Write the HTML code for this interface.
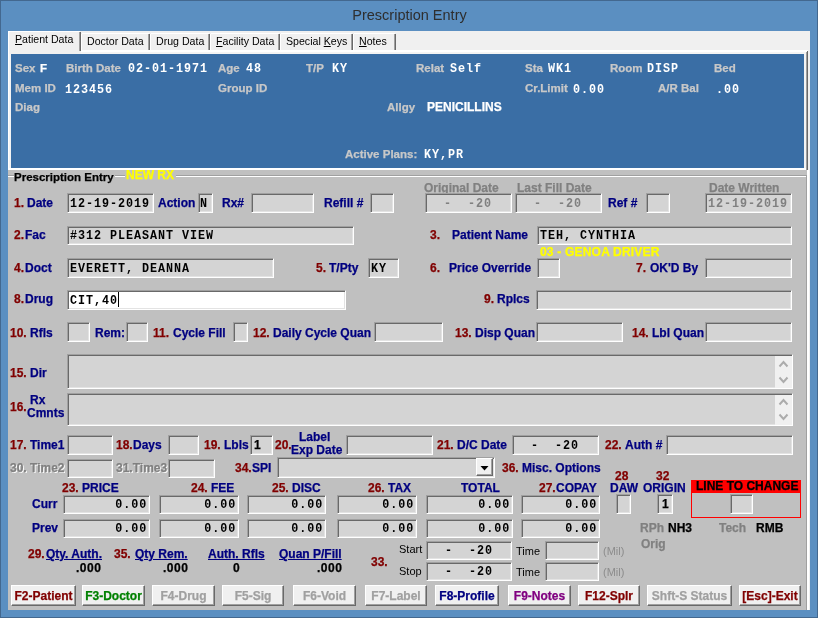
<!DOCTYPE html><html><head><meta charset="utf-8"><style>
*{margin:0;padding:0;box-sizing:border-box}
html,body{width:818px;height:618px;overflow:hidden;-webkit-font-smoothing:antialiased;background:#5b8fc1;font-family:"Liberation Sans",sans-serif}
#win{position:absolute;left:0;top:0;width:818px;height:618px;background:#5b8fc1;border:1px solid #43688f}
#title{position:absolute;left:0;top:7px;width:818px;text-align:center;font-size:14.5px;color:#2e2e2e;padding-left:1px}
#client{position:absolute;left:8px;top:31px;width:802px;height:579px;background:#f0f0f0}
.tabt{position:absolute;z-index:3;font-size:10.6px;color:#000;white-space:nowrap;line-height:13px}
.tabX{position:absolute;top:33px;height:19px;font-size:10.6px;color:#000;padding-left:6px;white-space:nowrap;line-height:17px;border-left:1px solid #fff;border-top:1px solid #fff}
.tab:after{content:"";position:absolute;right:0;top:1px;bottom:0;width:1px;background:#696969;box-shadow:-1px 0 #a0a0a0}
.pl{position:absolute;font-size:11.5px;font-weight:bold;-webkit-text-stroke:0.25px;color:#c8c8c8;white-space:nowrap;line-height:14px}
.pv{position:absolute;font-family:"Liberation Mono",monospace;font-size:13.33px;font-weight:bold;color:#fff;white-space:pre;line-height:14px;letter-spacing:1.09px;transform:scaleX(.88);transform-origin:0 0}
.l{position:absolute;font-size:12px;font-weight:bold;-webkit-text-stroke:0.25px;white-space:nowrap;line-height:14px}
.f{position:absolute;background:#d4d4d4;border:1px solid;border-color:#a0a0a0 #fff #fff #a0a0a0;box-shadow:inset 1px 1px #696969,inset -1px -1px #e3e3e3}
.v{position:absolute;font-family:"Liberation Mono",monospace;font-size:13.33px;font-weight:bold;color:#000;white-space:pre;line-height:14px;letter-spacing:1.09px;transform:scaleX(.88);transform-origin:0 0}
.vr{transform-origin:100% 0}
.b{position:absolute;top:585px;-webkit-text-stroke:0.25px;height:21px;background:#f0f0f0;border:1px solid;border-color:#fff #696969 #696969 #fff;box-shadow:inset -1px -1px #a0a0a0;font-size:12px;font-weight:bold;text-align:center;line-height:18px;padding-top:1px;white-space:nowrap}
.emb{color:#808080;text-shadow:1px 1px 0 #fff}
.s{position:absolute;font-size:11px;color:#000;white-space:nowrap;line-height:14px}
</style></head><body>
<div id="root" style="position:absolute;left:0;top:0;width:818px;height:618px;will-change:transform">
<div id="win"></div>
<div id="title">Prescription Entry</div>
<div id="client"></div>
<div style="position:absolute;left:8px;top:50px;width:800px;height:120px;background:#fff"></div>
<div style="position:absolute;left:807px;top:51px;width:1px;height:119px;background:#696969"></div>
<div style="position:absolute;left:806px;top:52px;width:1px;height:118px;background:#a0a0a0"></div>
<div style="position:absolute;left:9px;top:52px;width:797px;height:116px;background:#f4f4f4"></div>
<div style="position:absolute;left:8px;top:31px;width:73px;height:23px;background:#f0f0f0;z-index:2"></div>
<div style="position:absolute;left:8px;top:31px;width:72px;height:1px;background:#fff;z-index:2"></div>
<div style="position:absolute;left:8px;top:31px;width:1px;height:23px;background:#fff;z-index:2"></div>
<div style="position:absolute;left:80px;top:32px;width:1px;height:19px;background:#696969;z-index:2"></div>
<div style="position:absolute;left:79px;top:32px;width:1px;height:19px;background:#a0a0a0;z-index:2"></div>
<div class="tabt" style="left:15px;top:33px"><u>P</u>atient Data</div>
<div style="position:absolute;left:81px;top:33px;width:69px;height:17px;background:#f0f0f0;z-index:1"></div>
<div style="position:absolute;left:82px;top:33px;width:67px;height:1px;background:#fff;z-index:1"></div>
<div style="position:absolute;left:81px;top:34px;width:1px;height:16px;background:#fff;z-index:1"></div>
<div style="position:absolute;left:149px;top:34px;width:1px;height:16px;background:#696969;z-index:1"></div>
<div style="position:absolute;left:148px;top:34px;width:1px;height:16px;background:#a0a0a0;z-index:1"></div>
<div class="tabt" style="left:87px;top:35px">Doctor Data</div>
<div style="position:absolute;left:150px;top:33px;width:60px;height:17px;background:#f0f0f0;z-index:1"></div>
<div style="position:absolute;left:151px;top:33px;width:58px;height:1px;background:#fff;z-index:1"></div>
<div style="position:absolute;left:150px;top:34px;width:1px;height:16px;background:#fff;z-index:1"></div>
<div style="position:absolute;left:209px;top:34px;width:1px;height:16px;background:#696969;z-index:1"></div>
<div style="position:absolute;left:208px;top:34px;width:1px;height:16px;background:#a0a0a0;z-index:1"></div>
<div class="tabt" style="left:156px;top:35px">Drug Data</div>
<div style="position:absolute;left:210px;top:33px;width:70px;height:17px;background:#f0f0f0;z-index:1"></div>
<div style="position:absolute;left:211px;top:33px;width:68px;height:1px;background:#fff;z-index:1"></div>
<div style="position:absolute;left:210px;top:34px;width:1px;height:16px;background:#fff;z-index:1"></div>
<div style="position:absolute;left:279px;top:34px;width:1px;height:16px;background:#696969;z-index:1"></div>
<div style="position:absolute;left:278px;top:34px;width:1px;height:16px;background:#a0a0a0;z-index:1"></div>
<div class="tabt" style="left:216px;top:35px"><u>F</u>acility Data</div>
<div style="position:absolute;left:280px;top:33px;width:73px;height:17px;background:#f0f0f0;z-index:1"></div>
<div style="position:absolute;left:281px;top:33px;width:71px;height:1px;background:#fff;z-index:1"></div>
<div style="position:absolute;left:280px;top:34px;width:1px;height:16px;background:#fff;z-index:1"></div>
<div style="position:absolute;left:352px;top:34px;width:1px;height:16px;background:#696969;z-index:1"></div>
<div style="position:absolute;left:351px;top:34px;width:1px;height:16px;background:#a0a0a0;z-index:1"></div>
<div class="tabt" style="left:286px;top:35px">Special <u>K</u>eys</div>
<div style="position:absolute;left:353px;top:33px;width:43px;height:17px;background:#f0f0f0;z-index:1"></div>
<div style="position:absolute;left:354px;top:33px;width:41px;height:1px;background:#fff;z-index:1"></div>
<div style="position:absolute;left:353px;top:34px;width:1px;height:16px;background:#fff;z-index:1"></div>
<div style="position:absolute;left:395px;top:34px;width:1px;height:16px;background:#696969;z-index:1"></div>
<div style="position:absolute;left:394px;top:34px;width:1px;height:16px;background:#a0a0a0;z-index:1"></div>
<div class="tabt" style="left:359px;top:35px"><u>N</u>otes</div>
<div style="position:absolute;left:11px;top:54px;width:793px;height:114px;background:#3a6ea5;z-index:3"></div>
<div style="position:absolute;left:0;top:0;width:818px;height:618px;z-index:4">
<div class="pl" style="left:15px;top:61px;">Sex</div>
<div class="pl" style="left:40px;top:61px;color:#fff">F</div>
<div class="pl" style="left:66px;top:61px;">Birth Date</div>
<div class="pv" style="left:128px;top:62px;">02-01-1971</div>
<div class="pl" style="left:218px;top:61px;">Age</div>
<div class="pv" style="left:246px;top:62px;">48</div>
<div class="pl" style="left:306px;top:61px;">T/P</div>
<div class="pv" style="left:332px;top:62px;">KY</div>
<div class="pl" style="left:416px;top:61px;">Relat</div>
<div class="pv" style="left:450px;top:62px;">Self</div>
<div class="pl" style="left:525px;top:61px;">Sta</div>
<div class="pv" style="left:548px;top:62px;">WK1</div>
<div class="pl" style="left:610px;top:61px;">Room</div>
<div class="pv" style="left:647px;top:62px;">DISP</div>
<div class="pl" style="left:714px;top:61px;">Bed</div>
<div class="pl" style="left:15px;top:81px;">Mem ID</div>
<div class="pv" style="left:65px;top:83px;">123456</div>
<div class="pl" style="left:218px;top:81px;">Group ID</div>
<div class="pl" style="left:525px;top:81px;">Cr.Limit</div>
<div class="pv" style="left:573px;top:83px;">0.00</div>
<div class="pl" style="left:658px;top:81px;">A/R Bal</div>
<div class="pv" style="left:716px;top:83px;">.00</div>
<div class="pl" style="left:15px;top:100px;">Diag</div>
<div class="pl" style="left:387px;top:100px;">Allgy</div>
<div class="pl" style="left:427px;top:100px;color:#fff;font-size:12px">PENICILLINS</div>
<div class="pl" style="left:345px;top:147px;">Active Plans:</div>
<div class="pv" style="left:424px;top:148px;">KY,PR</div>
</div>
<div style="position:absolute;left:8px;top:170px;width:799px;height:440px;background:#c0c0c0"></div>
<div style="position:absolute;left:807px;top:170px;width:2px;height:440px;background:#fff"></div>
<div style="position:absolute;left:8px;top:175px;width:6px;height:1px;background:#a0a0a0"></div>
<div style="position:absolute;left:8px;top:176px;width:6px;height:1px;background:#fff"></div>
<div style="position:absolute;left:115px;top:175px;width:10px;height:1px;background:#a0a0a0"></div>
<div style="position:absolute;left:115px;top:176px;width:10px;height:1px;background:#fff"></div>
<div style="position:absolute;left:176px;top:175px;width:630px;height:1px;background:#a0a0a0"></div>
<div style="position:absolute;left:176px;top:176px;width:630px;height:1px;background:#fff"></div>
<div style="position:absolute;left:806px;top:175px;width:1px;height:435px;background:#a0a0a0"></div>
<div class="l" style="left:14px;top:170px;color:#000;font-size:11.5px">Prescription Entry</div>
<div class="l" style="left:126px;top:168px;color:#ffff00">NEW RX</div>
<div class="l" style="left:14px;top:196px;color:#800000">1.</div>
<div class="l" style="left:27px;top:196px;color:#000080">Date</div>
<div class="f" style="left:67px;top:193px;width:87px;height:20px;"><span class="v" style="left:2px;top:3px;">12-19-2019</span></div>
<div class="l" style="left:158px;top:196px;color:#000080;">Action</div>
<div class="f" style="left:198px;top:193px;width:15px;height:20px;"><span class="v" style="left:1px;top:3px;">N</span></div>
<div class="l" style="left:222px;top:196px;color:#000080;">Rx#</div>
<div class="f" style="left:251px;top:193px;width:63px;height:20px;"></div>
<div class="l" style="left:324px;top:196px;color:#000080;">Refill #</div>
<div class="f" style="left:370px;top:193px;width:24px;height:20px;"></div>
<div class="l" style="left:424px;top:181px;color:#808080;">Original Date</div>
<div class="f" style="left:425px;top:193px;width:87px;height:20px;"><span class="v" style="left:2px;top:3px;color:#808080;">  -  -20</span></div>
<div class="l" style="left:517px;top:181px;color:#808080;">Last Fill Date</div>
<div class="f" style="left:515px;top:193px;width:87px;height:20px;"><span class="v" style="left:2px;top:3px;color:#808080;">  -  -20</span></div>
<div class="l" style="left:608px;top:196px;color:#000080;">Ref #</div>
<div class="f" style="left:646px;top:193px;width:24px;height:20px;"></div>
<div class="l" style="left:709px;top:181px;color:#808080;">Date Written</div>
<div class="f" style="left:705px;top:193px;width:87px;height:20px;"><span class="v" style="left:2px;top:3px;color:#808080;">12-19-2019</span></div>
<div class="l" style="left:14px;top:228px;color:#800000">2.</div>
<div class="l" style="left:25px;top:228px;color:#000080">Fac</div>
<div class="f" style="left:67px;top:226px;width:287px;height:19px;"><span class="v" style="left:2px;top:2px;">#312 PLEASANT VIEW</span></div>
<div class="l" style="left:430px;top:228px;color:#800000">3.</div>
<div class="l" style="left:452px;top:228px;color:#000080;">Patient Name</div>
<div class="f" style="left:537px;top:226px;width:255px;height:19px;"><span class="v" style="left:2px;top:2px;">TEH, CYNTHIA</span></div>
<div class="l" style="left:540px;top:245px;color:#ffff00;letter-spacing:0.2px">03 - GENOA DRIVER</div>
<div class="l" style="left:14px;top:261px;color:#800000">4.</div>
<div class="l" style="left:25px;top:261px;color:#000080">Doct</div>
<div class="f" style="left:67px;top:258px;width:207px;height:20px;"><span class="v" style="left:2px;top:3px;">EVERETT, DEANNA</span></div>
<div class="l" style="left:316px;top:261px;color:#800000">5.</div>
<div class="l" style="left:329px;top:261px;color:#000080">T/Pty</div>
<div class="f" style="left:368px;top:258px;width:31px;height:20px;"><span class="v" style="left:2px;top:3px;">KY</span></div>
<div class="l" style="left:430px;top:261px;color:#800000">6.</div>
<div class="l" style="left:449px;top:261px;color:#000080;">Price Override</div>
<div class="f" style="left:537px;top:258px;width:23px;height:20px;"></div>
<div class="l" style="left:636px;top:261px;color:#800000">7.</div>
<div class="l" style="left:650px;top:261px;color:#000080;">OK'D By</div>
<div class="f" style="left:705px;top:258px;width:87px;height:20px;"></div>
<div class="l" style="left:14px;top:292px;color:#800000">8.</div>
<div class="l" style="left:25px;top:292px;color:#000080">Drug</div>
<div class="f" style="left:67px;top:290px;width:279px;height:20px;background:#fff;"><span class="v" style="left:2px;top:3px;">CIT,40</span></div>
<div style="position:absolute;left:118px;top:292px;width:1px;height:15px;background:#000"></div>
<div class="l" style="left:484px;top:292px;color:#800000">9.</div>
<div class="l" style="left:497px;top:292px;color:#000080;">Rplcs</div>
<div class="f" style="left:536px;top:290px;width:256px;height:20px;"></div>
<div class="l" style="left:10px;top:326px;color:#800000">10.</div>
<div class="l" style="left:30px;top:326px;color:#000080">Rfls</div>
<div class="f" style="left:67px;top:322px;width:23px;height:20px;"></div>
<div class="l" style="left:95px;top:326px;color:#000080;">Rem:</div>
<div class="f" style="left:126px;top:322px;width:22px;height:20px;"></div>
<div class="l" style="left:153px;top:326px;color:#800000">11.</div>
<div class="l" style="left:173px;top:326px;color:#000080;">Cycle Fill</div>
<div class="f" style="left:233px;top:322px;width:15px;height:20px;"></div>
<div class="l" style="left:253px;top:326px;color:#800000">12.</div>
<div class="l" style="left:273px;top:326px;color:#000080;">Daily Cycle Quan</div>
<div class="f" style="left:374px;top:322px;width:69px;height:20px;"></div>
<div class="l" style="left:455px;top:326px;color:#800000">13.</div>
<div class="l" style="left:475px;top:326px;color:#000080;">Disp Quan</div>
<div class="f" style="left:536px;top:322px;width:87px;height:20px;"></div>
<div class="l" style="left:632px;top:326px;color:#800000">14.</div>
<div class="l" style="left:652px;top:326px;color:#000080;">Lbl Quan</div>
<div class="f" style="left:705px;top:322px;width:87px;height:20px;"></div>
<div class="l" style="left:10px;top:366px;color:#800000">15.</div>
<div class="l" style="left:30px;top:366px;color:#000080">Dir</div>
<div class="f" style="left:67px;top:354px;width:726px;height:35px;"></div>
<div class="l" style="left:10px;top:400px;color:#800000">16.</div>
<div class="l" style="left:30px;top:393px;color:#000080;">Rx</div>
<div class="l" style="left:27px;top:406px;color:#000080;">Cmnts</div>
<div class="f" style="left:67px;top:393px;width:726px;height:33px;"></div>
<div style="position:absolute;left:775px;top:356px;width:17px;height:32px;background:#f0f0f0"></div>
<svg style="position:absolute;left:778px;top:360px" width="11" height="8"><path d="M1.5 6.5 L5.5 2 L9.5 6.5" stroke="#acacac" stroke-width="2" fill="none"/></svg>
<svg style="position:absolute;left:778px;top:376px" width="11" height="8"><path d="M1.5 1.5 L5.5 6 L9.5 1.5" stroke="#acacac" stroke-width="2" fill="none"/></svg>
<div style="position:absolute;left:775px;top:395px;width:17px;height:30px;background:#f0f0f0"></div>
<svg style="position:absolute;left:778px;top:398px" width="11" height="8"><path d="M1.5 6.5 L5.5 2 L9.5 6.5" stroke="#acacac" stroke-width="2" fill="none"/></svg>
<svg style="position:absolute;left:778px;top:413px" width="11" height="8"><path d="M1.5 1.5 L5.5 6 L9.5 1.5" stroke="#acacac" stroke-width="2" fill="none"/></svg>
<div class="l" style="left:10px;top:438px;color:#800000">17.</div>
<div class="l" style="left:30px;top:438px;color:#000080">Time1</div>
<div class="f" style="left:67px;top:435px;width:46px;height:20px;"></div>
<div class="l" style="left:116px;top:438px;color:#800000">18.</div>
<div class="l" style="left:133px;top:438px;color:#000080">Days</div>
<div class="f" style="left:168px;top:435px;width:31px;height:20px;"></div>
<div class="l" style="left:204px;top:438px;color:#800000">19.</div>
<div class="l" style="left:224px;top:438px;color:#000080">Lbls</div>
<div class="f" style="left:250px;top:435px;width:23px;height:20px;"></div>
<div class="l" style="left:254px;top:438px;color:#000;">1</div>
<div class="l" style="left:275px;top:438px;color:#800000">20.</div>
<div class="l" style="left:299px;top:430px;color:#000080;">Label</div>
<div class="l" style="left:291px;top:443px;color:#000080;">Exp Date</div>
<div class="f" style="left:346px;top:435px;width:87px;height:20px;"></div>
<div class="l" style="left:437px;top:438px;color:#800000">21.</div>
<div class="l" style="left:457px;top:438px;color:#000080">D/C Date</div>
<div class="f" style="left:512px;top:435px;width:87px;height:20px;"><span class="v" style="left:2px;top:3px;">  -  -20</span></div>
<div class="l" style="left:605px;top:438px;color:#800000">22.</div>
<div class="l" style="left:625px;top:438px;color:#000080">Auth #</div>
<div class="f" style="left:666px;top:435px;width:127px;height:20px;"></div>
<div class="l emb" style="left:10px;top:461px;color:#808080;">30. Time2</div>
<div class="f" style="left:67px;top:459px;width:46px;height:19px;"></div>
<div class="l emb" style="left:116px;top:461px;color:#808080;">31.Time3</div>
<div class="f" style="left:168px;top:459px;width:47px;height:19px;"></div>
<div class="l" style="left:235px;top:461px;color:#800000">34.</div>
<div class="l" style="left:252px;top:461px;color:#000080">SPI</div>
<div class="f" style="left:277px;top:457px;width:218px;height:21px;"></div>
<div style="position:absolute;left:476px;top:458px;width:17px;height:18px;background:#f0f0f0;border:1px solid;border-color:#fff #696969 #696969 #fff;box-shadow:inset -1px -1px #a0a0a0"></div>
<svg style="position:absolute;left:480px;top:466px" width="10" height="6"><path d="M0.5 0 H8.5 L4.5 4.5 Z" fill="#000"/></svg>
<div class="l" style="left:502px;top:461px;color:#800000">36.</div>
<div class="l" style="left:522px;top:461px;color:#000080">Misc. Options</div>
<div class="l" style="left:62px;top:481px;color:#800000">23.</div>
<div class="l" style="left:82px;top:481px;color:#000080">PRICE</div>
<div class="l" style="left:191px;top:481px;color:#800000">24.</div>
<div class="l" style="left:211px;top:481px;color:#000080">FEE</div>
<div class="l" style="left:272px;top:481px;color:#800000">25.</div>
<div class="l" style="left:292px;top:481px;color:#000080">DISC</div>
<div class="l" style="left:368px;top:481px;color:#800000">26.</div>
<div class="l" style="left:388px;top:481px;color:#000080">TAX</div>
<div class="l" style="left:461px;top:481px;color:#000080;">TOTAL</div>
<div class="l" style="left:539px;top:481px;color:#800000">27.</div>
<div class="l" style="left:556px;top:481px;color:#000080">COPAY</div>
<div class="l" style="left:615px;top:469px;color:#800000">28</div>
<div class="l" style="left:610px;top:481px;color:#000080;">DAW</div>
<div class="l" style="left:656px;top:469px;color:#800000">32</div>
<div class="l" style="left:643px;top:481px;color:#000080;">ORIGIN</div>
<div style="position:absolute;left:691px;top:480px;width:110px;height:38px;border:1px solid #ff0000"></div>
<div style="position:absolute;left:691px;top:480px;width:110px;height:13px;background:#ff0000"></div>
<div class="l" style="left:696px;top:479px;color:#000;">LINE TO CHANGE</div>
<div class="l" style="left:32px;top:497px;color:#000080;">Curr</div>
<div class="f" style="left:63px;top:495px;width:87px;height:19px;"><span class="v vr" style="right:2px;top:2px;">0.00</span></div>
<div class="f" style="left:159px;top:495px;width:80px;height:19px;"><span class="v vr" style="right:2px;top:2px;">0.00</span></div>
<div class="f" style="left:247px;top:495px;width:79px;height:19px;"><span class="v vr" style="right:2px;top:2px;">0.00</span></div>
<div class="f" style="left:337px;top:495px;width:80px;height:19px;"><span class="v vr" style="right:2px;top:2px;">0.00</span></div>
<div class="f" style="left:426px;top:495px;width:87px;height:19px;"><span class="v vr" style="right:2px;top:2px;">0.00</span></div>
<div class="f" style="left:521px;top:495px;width:79px;height:19px;"><span class="v vr" style="right:2px;top:2px;">0.00</span></div>
<div class="f" style="left:616px;top:494px;width:15px;height:20px;"></div>
<div class="f" style="left:657px;top:494px;width:16px;height:20px;"></div>
<div class="l" style="left:662px;top:497px;color:#000;">1</div>
<div class="f" style="left:730px;top:494px;width:23px;height:20px;"></div>
<div class="l" style="left:32px;top:521px;color:#000080;">Prev</div>
<div class="f" style="left:63px;top:519px;width:87px;height:19px;"><span class="v vr" style="right:2px;top:2px;">0.00</span></div>
<div class="f" style="left:159px;top:519px;width:80px;height:19px;"><span class="v vr" style="right:2px;top:2px;">0.00</span></div>
<div class="f" style="left:247px;top:519px;width:79px;height:19px;"><span class="v vr" style="right:2px;top:2px;">0.00</span></div>
<div class="f" style="left:337px;top:519px;width:80px;height:19px;"><span class="v vr" style="right:2px;top:2px;">0.00</span></div>
<div class="f" style="left:426px;top:519px;width:87px;height:19px;"><span class="v vr" style="right:2px;top:2px;">0.00</span></div>
<div class="f" style="left:521px;top:519px;width:79px;height:19px;"><span class="v vr" style="right:2px;top:2px;">0.00</span></div>
<div class="l" style="left:640px;top:521px;color:#808080;">RPh</div>
<div class="l" style="left:668px;top:521px;color:#000;">NH3</div>
<div class="l" style="left:719px;top:521px;color:#808080;">Tech</div>
<div class="l" style="left:756px;top:521px;color:#000;">RMB</div>
<div class="l" style="left:641px;top:537px;color:#808080;">Orig</div>
<div class="l" style="left:28px;top:547px;color:#800000">29.</div>
<div class="l" style="left:46px;top:547px;color:#000080;"><u>Qty. Auth.</u></div>
<div class="l" style="left:76px;top:561px;color:#000;letter-spacing:0.5px">.000</div>
<div class="l" style="left:114px;top:547px;color:#800000">35.</div>
<div class="l" style="left:135px;top:547px;color:#000080;"><u>Qty Rem.</u></div>
<div class="l" style="left:163px;top:561px;color:#000;letter-spacing:0.5px">.000</div>
<div class="l" style="left:208px;top:547px;color:#000080;"><u>Auth. Rfls</u></div>
<div class="l" style="left:233px;top:561px;color:#000;">0</div>
<div class="l" style="left:317px;top:547px;color:#000080;left:279px"><u>Quan P/Fill</u></div>
<div class="l" style="left:317px;top:561px;color:#000;letter-spacing:0.5px">.000</div>
<div class="l" style="left:371px;top:555px;color:#800000">33.</div>
<div class="s" style="left:399px;top:542px">Start</div>
<div class="f" style="left:426px;top:541px;width:86px;height:19px;"><span class="v" style="left:2px;top:2px;">  -  -20</span></div>
<div class="s" style="left:516px;top:544px">Time</div>
<div class="f" style="left:545px;top:541px;width:54px;height:19px;"></div>
<div class="s" style="left:603px;top:544px;color:#8c8c8c">(Mil)</div>
<div class="s" style="left:399px;top:564px">Stop</div>
<div class="f" style="left:426px;top:562px;width:86px;height:19px;"><span class="v" style="left:2px;top:2px;">  -  -20</span></div>
<div class="s" style="left:516px;top:565px">Time</div>
<div class="f" style="left:545px;top:562px;width:54px;height:19px;"></div>
<div class="s" style="left:603px;top:565px;color:#8c8c8c">(Mil)</div>
<div class="b" style="left:11px;width:65px;color:#800000">F2-Patient</div>
<div class="b" style="left:82px;width:63px;color:#008000">F3-Doctor</div>
<div class="b" style="left:152px;width:63px;color:#a0a0a0">F4-Drug</div>
<div class="b" style="left:222px;width:62px;color:#a0a0a0">F5-Sig</div>
<div class="b" style="left:293px;width:63px;color:#a0a0a0">F6-Void</div>
<div class="b" style="left:365px;width:62px;color:#a0a0a0">F7-Label</div>
<div class="b" style="left:435px;width:64px;color:#000080">F8-Profile</div>
<div class="b" style="left:508px;width:63px;color:#800080">F9-Notes</div>
<div class="b" style="left:578px;width:62px;color:#800000">F12-Splr</div>
<div class="b" style="left:647px;width:85px;color:#a0a0a0">Shft-S Status</div>
<div class="b" style="left:739px;width:62px;color:#800000">[Esc]-Exit</div>
</div></body></html>
